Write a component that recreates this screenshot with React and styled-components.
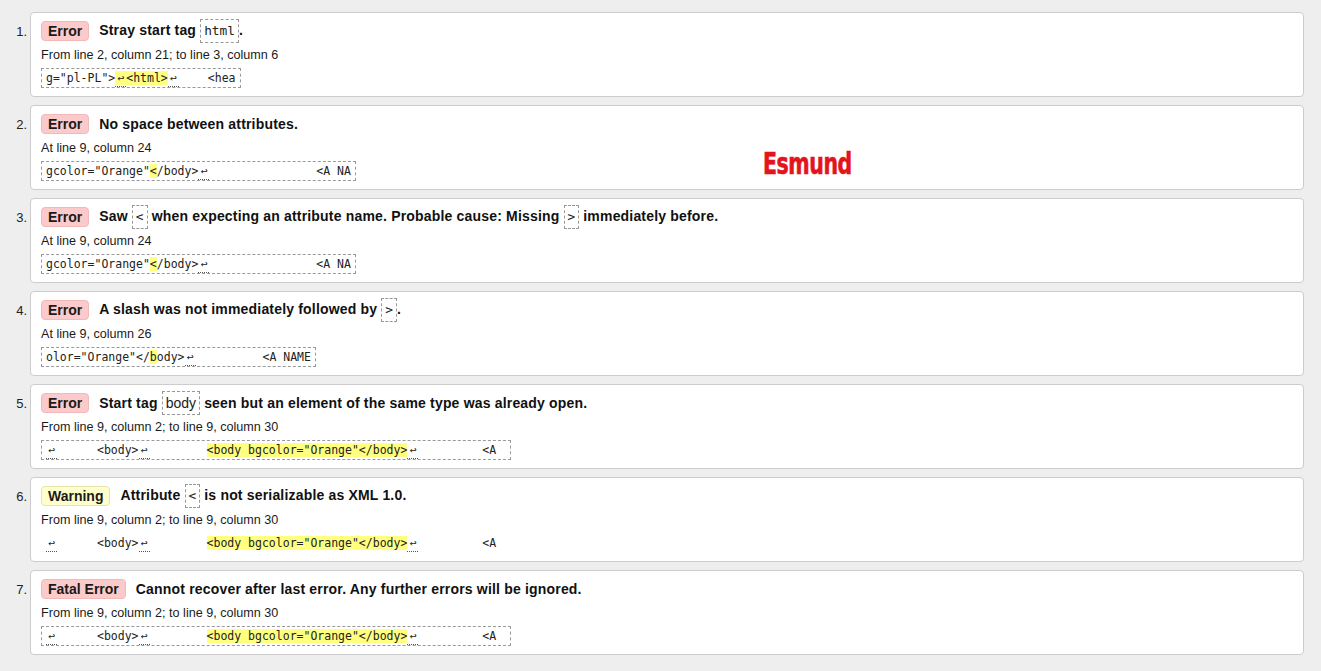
import React from "react";
import styled, { createGlobalStyle } from "styled-components";

const GlobalStyle = createGlobalStyle`
  html, body {
    margin: 0;
    padding: 0;
    background: #eeeeee;
  }
  body {
    font-family: "Liberation Sans", Arial, sans-serif;
    color: #1a1a1a;
  }
`;

const Page = styled.main`
  position: relative;
  padding: 12px 17px 16px 0;
  display: flex;
  flex-direction: column;
  gap: 8px;
  min-height: 671px;
  box-sizing: border-box;
`;

const Row = styled.div`
  display: flex;
  align-items: flex-start;
`;

const Num = styled.div`
  width: 27px;
  padding-right: 3px;
  text-align: right;
  font-size: 13px;
  line-height: 16px;
  padding-top: 12px;
  color: #222;
`;

const Card = styled.section`
  flex: 1;
  background: #fff;
  border: 1px solid #cccccc;
  border-radius: 4px;
  padding: 6px 10px 8px;
`;

const Head = styled.div`
  display: flex;
  align-items: center;
  height: 24px;
  font-size: 14px;
  font-weight: bold;
  letter-spacing: 0.18px;
  color: #111;
  white-space: nowrap;
`;

const Badge = styled.span`
  display: inline-block;
  height: 20px;
  line-height: 19px;
  box-sizing: border-box;
  padding: 0 6px;
  margin-right: 10px;
  border-radius: 4px;
  font-size: 14px;
  font-weight: bold;
  letter-spacing: 0;
  color: #1a1a1a;
  background: ${(p) => (p.$kind === "warning" ? "#ffffcc" : "#fccaca")};
  border: 1px solid ${(p) => (p.$kind === "warning" ? "#e6e6a8" : "#f2b9b9")};
`;

const TagCode = styled.code`
  display: inline-block;
  height: 24px;
  line-height: 22px;
  box-sizing: border-box;
  padding: 0 3px;
  border: 1px dashed #999;
  letter-spacing: 0;
  font-family: ${(p) =>
    p.$sans ? '"Liberation Sans", Arial, sans-serif' : '"DejaVu Sans Mono", monospace'};
  font-size: ${(p) => (p.$sans ? "14px" : "12.8px")};
  font-weight: normal;
  color: #222;
`;

const Location = styled.p`
  margin: 4px 0 0;
  font-size: 12.6px;
  line-height: 16px;
  color: #1a1a1a;
`;

const Extract = styled.div`
  display: inline-block;
  margin-top: 5px;
  height: 20px;
  line-height: 18px;
  box-sizing: border-box;
  padding: 0 4px;
  border: 1px dashed ${(p) => (p.$plain ? "transparent" : "#999")};
  font-family: "DejaVu Sans Mono", monospace;
  font-size: 11.5px;
  color: #222;
  white-space: pre;
`;

const Mark = styled.mark`
  background: #ffff80;
  color: inherit;
`;

const Lf = styled.span`
  display: inline-block;
  width: 11px;
  text-align: center;
  line-height: 16px;
  border-bottom: 1px dotted #555;
`;

const Gap = styled.span`
  display: inline-block;
  width: ${(p) => p.$w}px;
`;

const Logo = styled.div`
  position: absolute;
  left: 763px;
  top: 146px;
  font-family: "DejaVu Sans Condensed", "Liberation Sans", sans-serif;
  font-weight: bold;
  font-size: 30px;
  letter-spacing: -0.6px;
  color: #e3141c;
  -webkit-text-stroke: 0.6px #e3141c;
  transform: scaleX(0.76);
  transform-origin: left top;
`;

const BodyLine = ({ plain }) => (
  <Extract $plain={plain}>
    <Lf>↩</Lf>
    <Gap $w={40} />
    {"<body>"}
    <Lf>↩</Lf>
    <Gap $w={57} />
    <Mark>{'<body bgcolor="Orange"</body>'}</Mark>
    <Lf>↩</Lf>
    <Gap $w={64} />
    {"<A"}
    <Gap $w={10} />
  </Extract>
);

const messages = [
  {
    kind: "error",
    label: "Error",
    title: (
      <>
        Stray start tag <TagCode>html</TagCode>.
      </>
    ),
    loc: "From line 2, column 21; to line 3, column 6",
    extract: (
      <Extract>
        {'g="pl-PL">'}
        <Mark>
          <Lf>↩</Lf>
          {"<html>"}
        </Mark>
        <Lf>↩</Lf>
        <Gap $w={29} />
        {"<hea"}
      </Extract>
    ),
  },
  {
    kind: "error",
    label: "Error",
    title: <>No space between attributes.</>,
    loc: "At line 9, column 24",
    extract: (
      <Extract>
        {'gcolor="Orange"'}
        <Mark>{"<"}</Mark>
        {"/body>"}
        <Lf>↩</Lf>
        <Gap $w={107} />
        {"<A NA"}
      </Extract>
    ),
  },
  {
    kind: "error",
    label: "Error",
    title: (
      <>
        Saw <TagCode>&lt;</TagCode> when expecting an attribute name. Probable
        cause: Missing <TagCode>&gt;</TagCode> immediately before.
      </>
    ),
    loc: "At line 9, column 24",
    extract: (
      <Extract>
        {'gcolor="Orange"'}
        <Mark>{"<"}</Mark>
        {"/body>"}
        <Lf>↩</Lf>
        <Gap $w={107} />
        {"<A NA"}
      </Extract>
    ),
  },
  {
    kind: "error",
    label: "Error",
    title: (
      <>
        A slash was not immediately followed by <TagCode>&gt;</TagCode>.
      </>
    ),
    loc: "At line 9, column 26",
    extract: (
      <Extract>
        {'olor="Orange"</'}
        <Mark>b</Mark>
        {"ody>"}
        <Lf>↩</Lf>
        <Gap $w={67} />
        {"<A NAME"}
      </Extract>
    ),
  },
  {
    kind: "error",
    label: "Error",
    title: (
      <>
        Start tag <TagCode $sans>body</TagCode> seen but an element of the same
        type was already open.
      </>
    ),
    loc: "From line 9, column 2; to line 9, column 30",
    extract: <BodyLine />,
  },
  {
    kind: "warning",
    label: "Warning",
    title: (
      <>
        Attribute <TagCode>&lt;</TagCode> is not serializable as XML 1.0.
      </>
    ),
    loc: "From line 9, column 2; to line 9, column 30",
    extract: <BodyLine plain />,
  },
  {
    kind: "error",
    label: "Fatal Error",
    title: <>Cannot recover after last error. Any further errors will be ignored.</>,
    loc: "From line 9, column 2; to line 9, column 30",
    extract: <BodyLine />,
  },
];

const Message = ({ index, msg }) => (
  <Row>
    <Num>{index}.</Num>
    <Card>
      <Head>
        <Badge $kind={msg.kind}>{msg.label}</Badge>
        <span>{msg.title}</span>
      </Head>
      <Location>{msg.loc}</Location>
      {msg.extract}
    </Card>
  </Row>
);

const App = () => (
  <>
    <GlobalStyle />
    <Page>
      {messages.map((m, i) => (
        <Message key={i} index={i + 1} msg={m} />
      ))}
      <Logo>Esmund</Logo>
    </Page>
  </>
);

export default App;
